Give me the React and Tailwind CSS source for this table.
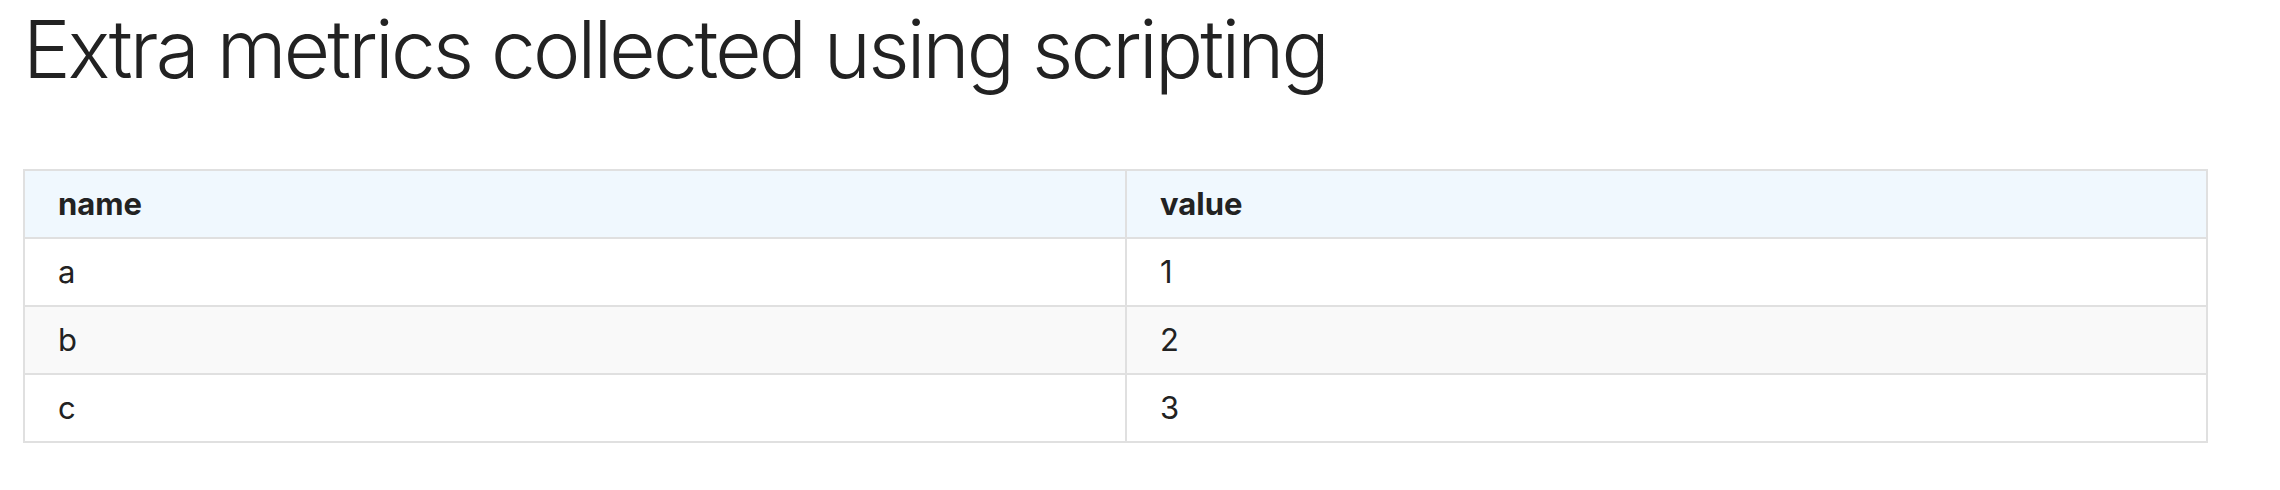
const rows = [
  { name: 'a', value: '1' },
  { name: 'b', value: '2' },
  { name: 'c', value: '3' },
];

export default function App() {
  return (
    <div className="min-h-screen bg-white px-[23px] pt-[9px] text-[#222222]" style={{ fontFamily: 'Inter, "Noto Sans", sans-serif' }}>
      <h1 className="text-[80px] font-light leading-none tracking-[-2.8px]">Extra metrics collected using scripting</h1>

      <table className="mt-[80px] w-[2185px] border-collapse border-2 border-[#e0e0e0] text-left text-[31px]">
        <thead>
          <tr className="bg-[#f0f8fe]">
            <th className="h-[68px] w-[1102px] border-2 border-[#e0e0e0] px-[33px] font-bold">name</th>
            <th className="h-[68px] border-2 border-[#e0e0e0] px-[33px] font-bold">value</th>
          </tr>
        </thead>
        <tbody>
          {rows.map((row, i) => (
            <tr key={row.name} className={i % 2 === 1 ? 'bg-[#f9f9f9]' : 'bg-white'}>
              <td className="h-[68px] border-2 border-[#e0e0e0] px-[33px]">{row.name}</td>
              <td className="h-[68px] border-2 border-[#e0e0e0] px-[33px]">{row.value}</td>
            </tr>
          ))}
        </tbody>
      </table>
    </div>
  );
}
